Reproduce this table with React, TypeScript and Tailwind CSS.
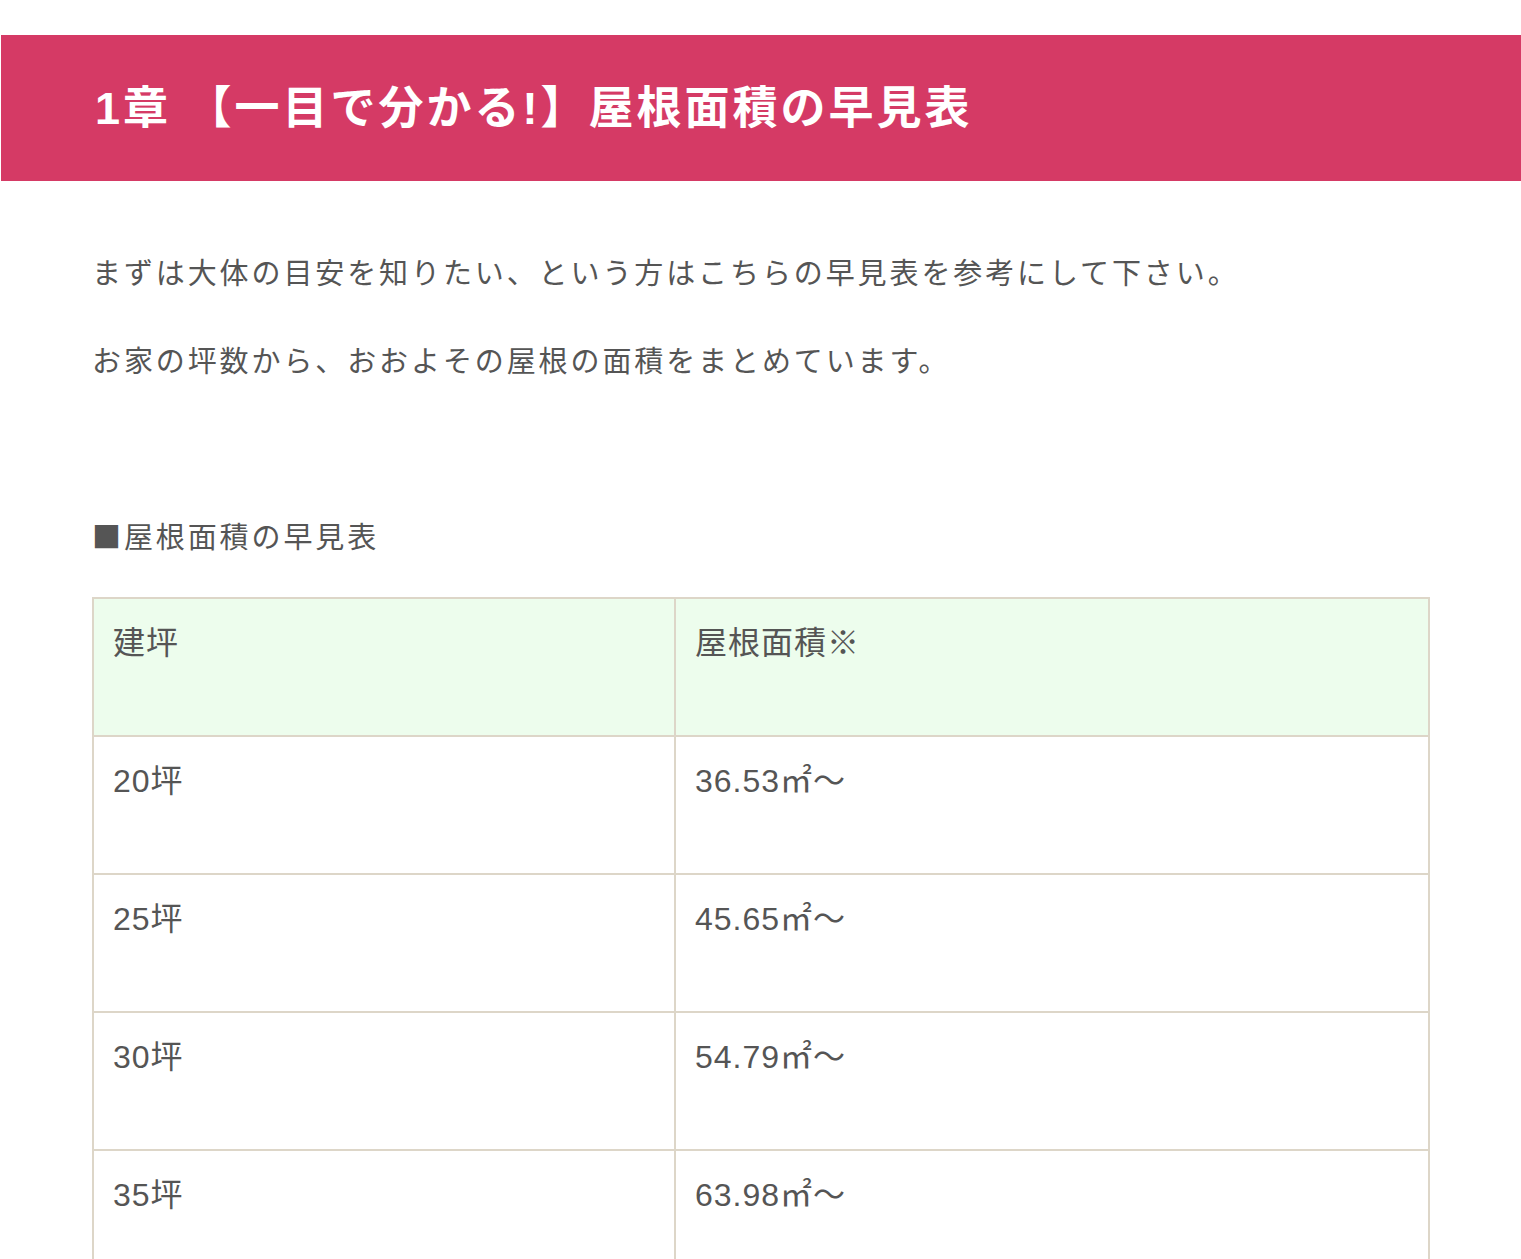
const rows = [
  { tsubo: "20坪", area: "36.53㎡〜" },
  { tsubo: "25坪", area: "45.65㎡〜" },
  { tsubo: "30坪", area: "54.79㎡〜" },
  { tsubo: "35坪", area: "63.98㎡〜" },
]

const font = "font-['Liberation_Sans','Noto_Sans_CJK_JP',sans-serif]"

function Cell({ children, head }: { children: React.ReactNode; head?: boolean }) {
  return (
    <div
      className={`h-[138px] border-r-2 border-b-2 border-[#ddd6c8] px-[19px] pt-[24px] text-[32px] leading-[40px] tracking-[1px] text-[#555] ${
        head ? "bg-[#edfded]" : "bg-white"
      }`}
    >
      {children}
    </div>
  )
}

export default function App() {
  return (
    <div className={`min-h-screen bg-white pt-[35px] pb-10 ${font}`}>
      <header className="ml-[1px] flex h-[146px] items-center bg-[#d53a65] pl-[94px]">
        <h2 className="text-[45px] font-bold leading-none tracking-[3px] text-white">
          1章 【一目で分かる!】屋根面積の早見表
        </h2>
      </header>

      <section className="pl-[92px]">
        <p className="mt-[69px] text-[29px] leading-[48px] tracking-[2.9px] text-[#555]">
          まずは大体の目安を知りたい、という方はこちらの早見表を参考にして下さい。
        </p>
        <p className="mt-[40px] text-[29px] leading-[48px] tracking-[2.9px] text-[#555]">
          お家の坪数から、おおよその屋根の面積をまとめています。
        </p>

        <h3 className="mt-[125px] text-[29px] leading-[48px] tracking-[2.9px] text-[#555]">
          <span className="font-['Noto_Sans_CJK_JP',sans-serif]">■</span>屋根面積の早見表
        </h3>

        <div className="mt-[35px] grid w-[1338px] grid-cols-[582px_1fr] border-t-2 border-l-2 border-[#ddd6c8]">
          <Cell head>建坪</Cell>
          <Cell head>屋根面積※</Cell>
          {rows.map((row) => (
            <div key={row.tsubo} className="contents">
              <Cell>{row.tsubo}</Cell>
              <Cell>{row.area}</Cell>
            </div>
          ))}
        </div>
      </section>
    </div>
  )
}
